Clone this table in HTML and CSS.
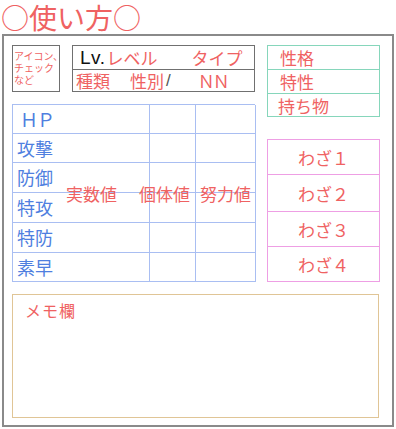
FILE: index.html
```html
<!DOCTYPE html>
<html lang="ja">
<head>
<meta charset="utf-8">
<link rel="stylesheet" href="styles.css">
</head>
<body>
<h1 class="title">○使い方○</h1>
<div class="sheet">
  <div class="upper">
    <div class="left-col">
      <div class="top-row">
        <div class="icon-box">アイコン、<br>チェック<br>など</div>
        <div class="lv-box">
          <div class="lv-row">
            <span class="lv">Lv.</span><span class="red">レベル</span><span class="red type">タイプ</span>
          </div>
          <div class="lv-row second">
            <span class="red">種類</span><span class="red sex">性別</span><span class="slash">/</span><span class="red nn">ＮＮ</span>
          </div>
        </div>
      </div>
      <div class="stats">
        <div class="cell label hp">ＨＰ</div><div class="cell"></div><div class="cell"></div>
        <div class="cell label">攻撃</div><div class="cell"></div><div class="cell"></div>
        <div class="cell label">防御</div><div class="cell"></div><div class="cell"></div>
        <div class="cell label">特攻</div><div class="cell"></div><div class="cell"></div>
        <div class="cell label">特防</div><div class="cell"></div><div class="cell"></div>
        <div class="cell label">素早</div><div class="cell"></div><div class="cell"></div>
        <div class="stat-overlay">
          <span class="real">実数値</span><span class="iv">個体値</span><span class="ev">努力値</span>
        </div>
      </div>
    </div>
    <div class="right-col">
      <div class="info-box">
        <div class="info-row">性格</div>
        <div class="info-row">特性</div>
        <div class="info-row item">持ち物</div>
      </div>
      <div class="moves">
        <div class="move">わざ１</div>
        <div class="move tall">わざ２</div>
        <div class="move">わざ３</div>
        <div class="move last">わざ４</div>
      </div>
    </div>
  </div>
  <div class="memo">メモ欄</div>
</div>
</body>
</html>
```
FILE: styles.css
```css
* { box-sizing: border-box; }
html, body { margin: 0; padding: 0; background: #fff; }
body {
  font-family: "Noto Sans CJK JP", "Noto Sans", sans-serif;
  color: #ef6262;
  width: 396px;
}
.title {
  margin: 0;
  height: 34px;
  padding-top: 1px;
  font-size: 28px;
  font-weight: normal;
  line-height: 32px;
  padding-left: 1px;
  color: #ef6262;
}
.sheet {
  margin-left: 2px;
  width: 392px;
  height: 393px;
  border: 2px solid #8a8a8a;
  padding: 9px 0 0 8px;
}
.upper {
  display: flex;
  gap: 12px;
}
.left-col {
  width: 243px;
  display: flex;
  flex-direction: column;
  gap: 12px;
}
.top-row {
  display: flex;
  gap: 12px;
  height: 47px;
}
.icon-box {
  flex: 0 0 48px;
  width: 48px;
  height: 47px;
  border: 1px solid #707070;
  font-size: 10px;
  line-height: 12px;
  padding: 4px 0 0 1px;
  white-space: nowrap;
  overflow: visible;
}
.lv-box {
  flex: 1;
  border: 1px solid #707070;
  display: flex;
  flex-direction: column;
}
.lv-row {
  height: 23px;
  display: flex;
  align-items: center;
  font-size: 17px;
  padding-left: 7px;
  white-space: nowrap;
}
.lv-row.second {
  height: 22px;
  border-top: 1px solid #707070;
  padding-left: 3px;
}
.lv {
  color: #111;
  font-family: "Liberation Sans", sans-serif;
  font-size: 19px;
  letter-spacing: 0.5px;
  margin-right: 1px;
}
.red { color: #ef6262; }
.type { margin-left: 34px; }
.sex { margin-left: 20px; }
.slash {
  color: #555;
  font-family: "Liberation Sans", sans-serif;
  font-size: 17px;
  margin-left: 2px;
}
.nn { margin-left: 27px; letter-spacing: -2px; }
.stats {
  position: relative;
  display: grid;
  grid-template-columns: 137px 46px 60px;
  grid-template-rows: 29px 29px 30px 30px 30px 29px;
  border-top: 1px solid #a9bef2;
  border-left: 1px solid #a9bef2;
}
.cell {
  border-right: 1px solid #a9bef2;
  border-bottom: 1px solid #a9bef2;
}
.label {
  color: #4f7fe0;
  font-size: 18px;
  line-height: 28px;
  padding-left: 4px;
}
.label.hp { padding-left: 7px; letter-spacing: -1px; }
.stat-overlay {
  position: absolute;
  left: 0;
  top: 0;
  right: 0;
  bottom: 0;
  display: flex;
  align-items: center;
  padding-left: 53px;
  font-size: 17px;
  color: #ef6262;
}
.iv { margin-left: 22px; }
.ev { margin-left: 10px; }
.right-col {
  width: 113px;
  display: flex;
  flex-direction: column;
  gap: 22px;
}
.info-box {
  border: 1px solid #86d6bb;
}
.info-row {
  height: 24px;
  line-height: 23px;
  font-size: 17px;
  padding-left: 12px;
  border-bottom: 1px solid #86d6bb;
}
.info-row.item { border-bottom: 0; height: 22px; padding-left: 10px; }
.moves {
  border: 1px solid #ee9fe4;
}
.move {
  height: 35px;
  display: flex;
  align-items: center;
  justify-content: center;
  font-size: 17px;
  border-bottom: 1px solid #ee9fe4;
}
.move.tall { height: 37px; }
.move.last { border-bottom: 0; height: 34px; }
.memo {
  margin-top: 12px;
  width: 367px;
  height: 124px;
  border: 1px solid #e0c596;
  font-size: 16px;
  padding: 3px 0 0 12px;
  letter-spacing: 1px;
}
```
